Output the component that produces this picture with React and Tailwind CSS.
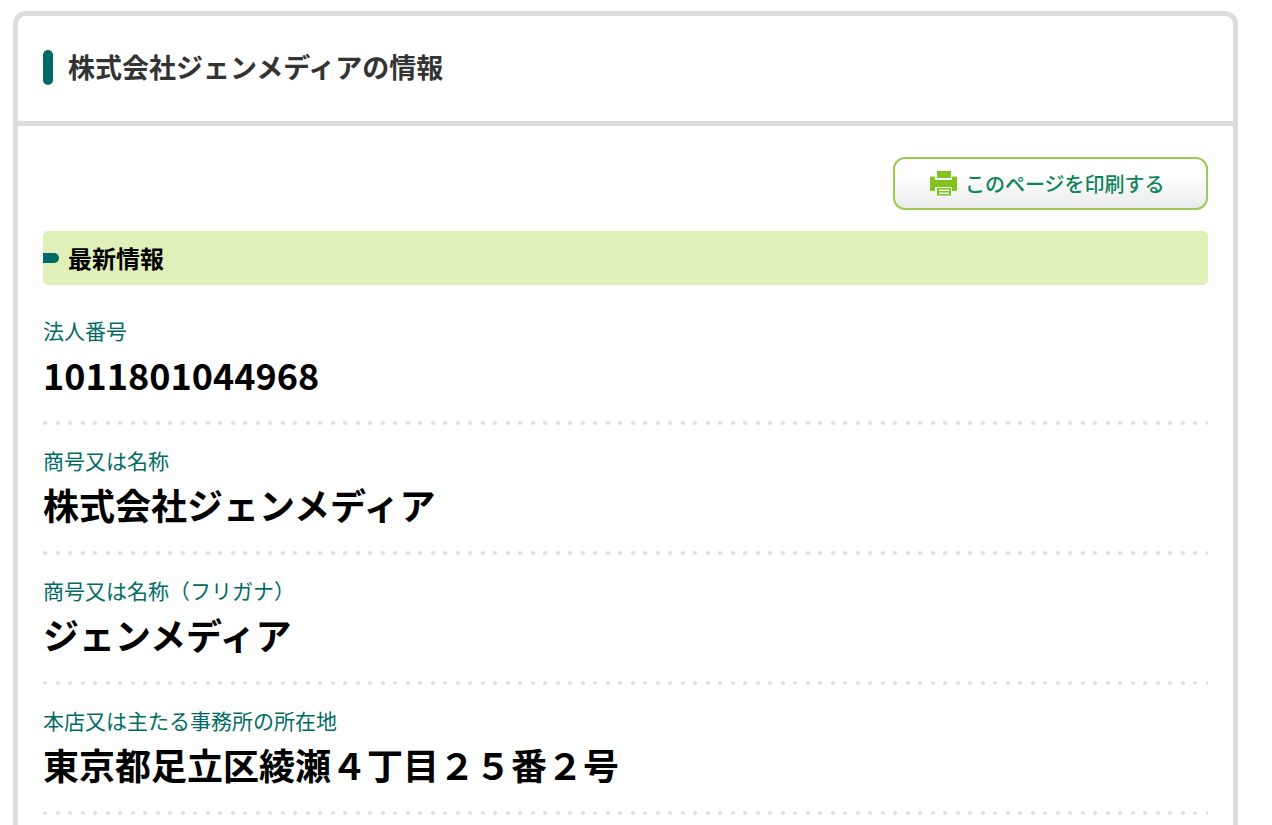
const entries = [
  { label: "法人番号", value: "1011801044968" },
  { label: "商号又は名称", value: "株式会社ジェンメディア" },
  { label: "商号又は名称（フリガナ）", value: "ジェンメディア" },
  { label: "本店又は主たる事務所の所在地", value: "東京都足立区綾瀬４丁目２５番２号" },
];

function PrinterIcon() {
  return (
    <svg width="27" height="25" viewBox="0 0 27 25" fill="#7fc31c" aria-hidden="true">
      <path d="M7 0h14v7H7z" />
      <path d="M0 6.500q0-1 1-1h3q1 0 1 1V9h17V6.500q0-1 1-1h3q1 0 1 1V19q0 1-1 1h-4v-4H5v4H1q-1 0-1-1z" />
      <path fillRule="evenodd" d="M7 17h14v7.500H7zM9 18.500v1.500h10v-1.500zM9 21.500V23h10v-1.500z" />
    </svg>
  );
}

export default function App() {
  return (
    <div className="flex min-h-screen flex-col bg-white pt-[11px] pr-[34px] pl-[13px] font-['Noto_Sans_CJK_JP',sans-serif] text-black">
      <main className="flex-1 rounded-t-[13px] border-[5px] border-b-0 border-[#dcdcdc] bg-white">
        <header className="flex items-center gap-[15px] border-b-[5px] border-[#dcdcdc] px-[25px] pt-[31px] pb-[34px]">
          <span className="h-[35px] w-[10px] rounded-full bg-[#006b66]" />
          <h1 className="text-[27px] leading-[40px] font-bold text-[#333333]">株式会社ジェンメディアの情報</h1>
        </header>
        <div className="px-[25px] pt-[31px] pb-2">
          <div className="flex justify-end">
            <button
              type="button"
              className="flex h-[53px] w-[315px] items-center gap-[8px] rounded-[12px] border-2 border-[#9bcb53] bg-linear-to-b from-white from-30% to-[#eaebec] pl-[35px] text-[20px] leading-[30px] font-medium text-[#0d845d]"
            >
              <PrinterIcon />
              このページを印刷する
            </button>
          </div>
          <section className="mt-[21px]">
            <div className="flex items-center gap-[9px] rounded-[5px] bg-[#dff1b9] py-[9px]">
              <span className="h-[10px] w-[16px] rounded-r-full bg-[#006b66]" />
              <h2 className="text-[24px] leading-[36px] font-bold">最新情報</h2>
            </div>
            <dl className="pt-[10px]">
              {entries.map(({ label, value }) => (
                <div key={label}>
                  <div className="pt-[19px] pb-[21px]">
                    <dt className="text-[21px] leading-[32px] text-[#006b66]">{label}</dt>
                    <dd className="pt-[2px] text-[36px] leading-[52px] font-bold">{value}</dd>
                  </div>
                  <div className="h-[4px] bg-[radial-gradient(circle_at_2px_2px,#dddddd_1px,transparent_3px),radial-gradient(circle_at_15px_2px,#dddddd_1px,transparent_3px)] bg-[length:25px_4px]" />
                </div>
              ))}
            </dl>
          </section>
        </div>
      </main>
    </div>
  );
}
